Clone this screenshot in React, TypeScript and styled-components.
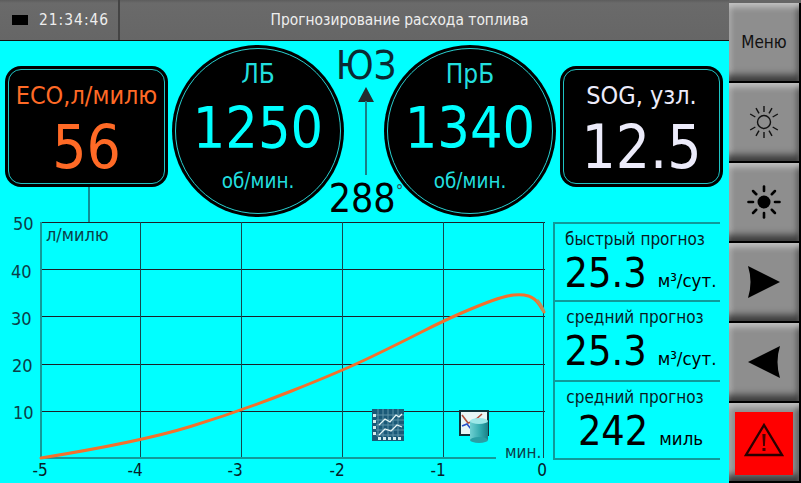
import styled, { createGlobalStyle } from 'styled-components';

const GlobalStyle = createGlobalStyle`
	html, body {
		margin: 0;
		padding: 0;
		background: #000;
	}
	body {
		font-family: "DejaVu Sans Condensed", "DejaVu Sans", sans-serif;
		font-stretch: condensed;
	}
`;

const Screen = styled.div`
	width: 801px;
	height: 483px;
	display: flex;
	overflow: hidden;
	background: #00ffff;
`;
const Main = styled.div`
	width: 729px;
	display: flex;
	flex-direction: column;
`;
const TitleBar = styled.header`
	height: 40px;
	flex: none;
	display: flex;
	align-items: center;
	background: linear-gradient(#5c5c5c 0, #6a6a6a 3px, #666 100%);
	border-bottom: 1px solid #111;
	color: #eee;
	font-size: 15.4px;
`;
const Clock = styled.div`
	width: 120px;
	height: 100%;
	box-sizing: border-box;
	display: flex;
	align-items: center;
	padding-left: 12px;
	gap: 11px;
	border-right: 2px solid #444;
	letter-spacing: 1px;
`;
const Indicator = styled.span`
	width: 16px;
	height: 10px;
	background: #000;
`;
const Title = styled.div`
	flex: 1;
	text-align: center;
	padding-right: 50px;
`;
const Gauges = styled.section`
	height: 174px;
	flex: none;
	display: flex;
	align-items: flex-start;
	padding: 4px 6px 0 5px;
	box-sizing: border-box;
`;
const SideColumn = styled.div<{ $left?: boolean }>`
	width: 163px;
	flex: none;
	margin: 21px ${p => (p.$left ? '4px' : '0')} 0 ${p => (p.$left ? '0' : '4px')};
`;
const ReadoutBox = styled.div`
	height: 121px;
	box-sizing: border-box;
	background: #000;
	border-radius: 16px;
	padding: 3px;
	display: flex;
`;
const ReadoutInner = styled.div<{ $color: string }>`
	flex: 1;
	border: 1.5px solid #1fc4c4;
	border-radius: 13px;
	color: ${p => p.$color};
	display: flex;
	flex-direction: column;
	align-items: center;
`;
const ReadoutLabel = styled.div`
	font-size: 25px;
	line-height: 30px;
	margin-top: 11px;
	white-space: nowrap;
`;
const ReadoutValue = styled.div`
	font-size: 60px;
	line-height: 64px;
	margin-top: 4px;
`;
const Stem = styled.div`
	width: 2px;
	height: 35px;
	margin-left: 83px;
	background: #0f8f96;
`;
const Dial = styled.div`
	width: 172px;
	height: 172px;
	flex: none;
	box-sizing: border-box;
	background: #000;
	border-radius: 50%;
	padding: 3px;
	display: flex;
`;
const DialInner = styled.div`
	flex: 1;
	border: 1.5px solid #28d0d0;
	border-radius: 50%;
	color: #00ffff;
	display: flex;
	flex-direction: column;
	align-items: center;
`;
const DialName = styled.div`
	font-size: 26px;
	line-height: 28px;
	margin-top: 11px;
	color: #22dede;
`;
const DialValue = styled.div`
	font-size: 57px;
	line-height: 70px;
	margin-top: 5px;
`;
const DialUnit = styled.div`
	font-size: 20.5px;
	line-height: 26px;
	margin-top: 5px;
	color: #22dede;
`;
const Compass = styled.div`
	width: 44px;
	margin-right: -4px;
	flex: none;
	display: flex;
	flex-direction: column;
	align-items: center;
	color: #0a2a33;
	position: relative;
	z-index: 1;
`;
const Bearing = styled.div`
	font-size: 39px;
	line-height: 42px;
	white-space: nowrap;
`;
const Heading = styled.div`
	font-size: 39px;
	line-height: 40px;
	white-space: nowrap;
	color: #000;
	margin-top: 4px;
	sup {
		font-size: 17px;
		line-height: 0;
		vertical-align: 15px;
		color: #35505a;
	}
`;
const Lower = styled.section`
	flex: 1;
	display: flex;
	min-height: 0;
`;
const Chart = styled.svg`
	width: 553px;
	height: 268px;
	flex: none;
	display: block;
	overflow: visible;
	font-family: "DejaVu Sans Condensed", "DejaVu Sans", sans-serif;
`;
const Stats = styled.div`
	width: 167px;
	height: 238px;
	margin-top: 7px;
	box-sizing: border-box;
	border-left: 2px solid #0f9a9a;
	border-bottom: 2px solid #0f9a9a;
	display: flex;
	flex-direction: column;
`;
const StatRow = styled.div<{ $h: number }>`
	height: ${p => p.$h}px;
	box-sizing: border-box;
	border-top: 2px solid #0f9a9a;
	color: #000;
	display: flex;
	flex-direction: column;
	align-items: center;
`;
const StatLabel = styled.div`
	font-size: 17px;
	line-height: 20px;
	margin-top: 5px;
	margin-right: 5px;
	color: #0a1a1f;
`;
const StatLine = styled.div`
	display: flex;
	align-items: baseline;
	gap: 11px;
	line-height: 40px;
	margin: 4px 0 0 6px;
`;
const StatValue = styled.span`
	font-size: 41px;
`;
const StatUnit = styled.span`
	font-size: 18.5px;
	white-space: nowrap;
`;
const Sidebar = styled.nav`
	width: 72px;
	flex: none;
	display: flex;
	flex-direction: column;
	padding: 3px 2px 0 0;
	box-sizing: border-box;
	gap: 2px;
	background: linear-gradient(#666 0, #666 3px, #000 3px);
`;
const SideButton = styled.button`
	height: 78px;
	flex: none;
	border: 0;
	padding: 0;
	font: inherit;
	font-size: 17px;
	color: #111;
	background: #8e8e8e;
	display: flex;
	align-items: center;
	justify-content: center;
	box-shadow:
		inset 0 7px 6px -3px #c4c4c4,
		inset 0 -9px 7px -3px #3c3c3c,
		inset 5px 0 5px -3px #bdbdbd,
		inset -5px 0 5px -3px #555;
`;
const AlarmFace = styled.div`
	width: 58px;
	height: 63px;
	margin-top: 2px;
	background: #ff0000;
	display: flex;
	align-items: center;
	justify-content: center;
	svg {
		margin-bottom: 6px;
	}
`;

const plot = { left: 41, right: 543, top: 7, bottom: 243 };
const xGrid = [140.5, 241.5, 342.5, 443.5, 543.5];
const yGrid = [7.5, 54.5, 101.5, 149.5, 196.5];
const xLabels: [string, number][] = [['-5', 40], ['-4', 135], ['-3', 235], ['-2', 337], ['-1', 438], ['0', 542]];
const yLabels: [string, number, number][] = [['50', 13, 15], ['40', 11, 63], ['30', 11, 110], ['20', 12, 157], ['10', 13, 204]];
const curve: [number, number][] = [
	[41, 243], [140, 227], [241, 196], [342, 156], [400, 128], [443, 106], [480, 90], [505, 81], [522, 79], [535, 83], [544, 97],
];

function smoothPath(points: [number, number][]) {
	let d = `M${points[0][0]} ${points[0][1]}`;
	for (let i = 1; i < points.length - 1; i++) {
		const mx = (points[i][0] + points[i + 1][0]) / 2;
		const my = (points[i][1] + points[i + 1][1]) / 2;
		d += ` Q${points[i][0]} ${points[i][1]} ${mx} ${my}`;
	}
	const last = points[points.length - 1];
	return `${d} L${last[0]} ${last[1]}`;
}

function TrendIcon() {
	return (
		<g transform="translate(372 194)">
			<rect width="32" height="32" fill="#1a5a78" />
			{[6, 11, 16, 21, 26].map(v => (
				<g key={v} stroke="#5d93a8" strokeWidth="1">
					<line x1={v} y1="0" x2={v} y2="28" />
					<line x1="4" y1={v} x2="32" y2={v} />
				</g>
			))}
			{[5, 11, 17, 23].map(v => (
				<rect key={v} x="1" y={v} width="3" height="3" fill="#d4ecec" />
			))}
			{[6, 11, 16, 21, 26].map(v => (
				<rect key={v} x={v} y="28" width="3" height="3" fill="#d4ecec" />
			))}
			<path d="M7 16 L13 10 L18 13 L24 6 L27 8 L30 5" fill="none" stroke="#e6f6f6" strokeWidth="1.3" />
			<path d="M7 26 L13 20 L19 22 L25 16 L30 18" fill="none" stroke="#e6f6f6" strokeWidth="1.3" />
		</g>
	);
}

function ArchiveIcon() {
	return (
		<g transform="translate(459 194)">
			<defs>
				<linearGradient id="drum" x1="0" x2="1" y1="0" y2="0">
					<stop offset="0" stopColor="#6fd0d2" />
					<stop offset="0.6" stopColor="#2fa8ac" />
					<stop offset="1" stopColor="#1b8086" />
				</linearGradient>
			</defs>
			<rect x="1" y="2" width="28" height="24" fill="#e8f6f6" stroke="#10323a" strokeWidth="2" />
			<path d="M3 6 L9 14 L15 12 L23 5" fill="none" stroke="#b0503c" strokeWidth="1.6" />
			<path d="M3 17 L8 15 L12 20" fill="none" stroke="#2850c8" strokeWidth="1.6" />
			<rect x="11" y="12" width="18" height="19" fill="url(#drum)" />
			<ellipse cx="20" cy="31" rx="9" ry="3" fill="#2a9ea4" />
			<ellipse cx="20" cy="12" rx="9" ry="3" fill="#9ce8e8" />
		</g>
	);
}

function SunOutline() {
	const rays = [0, 30, 60, 120, 150, 180, 210, 240, 300, 330];
	return (
		<svg width="34" height="34" viewBox="-17 -17 34 34">
			<circle r="6.5" fill="none" stroke="#111" strokeWidth="1.4" />
			{rays.map(a => (
				<line key={a} x1="0" y1="-10" x2="0" y2="-16" stroke="#111" strokeWidth="1.4" transform={`rotate(${a})`} />
			))}
		</svg>
	);
}

function SunFilled() {
	const rays = [0, 45, 90, 135, 180, 225, 270, 315];
	return (
		<svg width="34" height="34" viewBox="-17 -17 34 34">
			<circle r="6.5" fill="#000" />
			{rays.map(a => (
				<line key={a} x1="0" y1="-11" x2="0" y2="-15.5" stroke="#000" strokeWidth="2.6" strokeLinecap="round" transform={`rotate(${a})`} />
			))}
		</svg>
	);
}

function Pointer({ flip }: { flip?: boolean }) {
	return (
		<svg width="34" height="34" viewBox="0 0 34 34">
			<path d={flip ? 'M1 17 L33 1 Q28 17 33 33 Z' : 'M33 17 L1 1 Q6 17 1 33 Z'} fill="#000" />
		</svg>
	);
}

function App() {
	return (
		<Screen>
			<GlobalStyle />
			<Main>
				<TitleBar>
					<Clock>
						<Indicator />
						21:34:46
					</Clock>
					<Title>Прогнозирование расхода топлива</Title>
				</TitleBar>
				<Gauges>
					<SideColumn $left>
						<ReadoutBox>
							<ReadoutInner $color="#ff6a26">
								<ReadoutLabel>ECO,л/милю</ReadoutLabel>
								<ReadoutValue>56</ReadoutValue>
							</ReadoutInner>
						</ReadoutBox>
						<Stem />
					</SideColumn>
					<Dial>
						<DialInner>
							<DialName>ЛБ</DialName>
							<DialValue>1250</DialValue>
							<DialUnit>об/мин.</DialUnit>
						</DialInner>
					</Dial>
					<Compass>
						<Bearing>ЮЗ</Bearing>
						<svg width="16" height="88" viewBox="0 0 16 88">
							<path d="M8 0 L16 15 L0 15 Z" fill="#222c30" />
							<rect x="7" y="14" width="2" height="74" fill="#1a7f86" />
						</svg>
						<Heading>
							288<sup>°</sup>
						</Heading>
					</Compass>
					<Dial>
						<DialInner>
							<DialName>ПрБ</DialName>
							<DialValue>1340</DialValue>
							<DialUnit>об/мин.</DialUnit>
						</DialInner>
					</Dial>
					<SideColumn>
						<ReadoutBox>
							<ReadoutInner $color="#ecebfa">
								<ReadoutLabel>SOG, узл.</ReadoutLabel>
								<ReadoutValue>12.5</ReadoutValue>
							</ReadoutInner>
						</ReadoutBox>
					</SideColumn>
				</Gauges>
				<Lower>
					<Chart viewBox="0 0 553 268">
						{yGrid.map(y => (
							<line key={y} x1={plot.left} y1={y} x2={545} y2={y} stroke="#1c2028" strokeWidth="1" />
						))}
						{xGrid.map(x => (
							<line key={x} x1={x} y1={plot.top} x2={x} y2={plot.bottom} stroke="#15484e" strokeWidth="1" />
						))}
						<line x1={plot.left} y1={plot.top} x2={plot.left} y2={plot.bottom} stroke="#129a9a" strokeWidth="2" />
						<line x1={plot.left} y1={plot.bottom} x2={496} y2={plot.bottom} stroke="#129a9a" strokeWidth="2" />
						<path d={smoothPath(curve)} fill="none" stroke="#f4702c" strokeWidth="3" strokeLinecap="round" />
						<path d="M537 85 Q541 89 544 97" fill="none" stroke="#c0905a" strokeWidth="3" />
						<g fill="#0c3e48" fontSize="18">
							{yLabels.map(([t, x, y]) => (
								<text key={t} x={x} y={y}>
									{t}
								</text>
							))}
							<text x="46" y="26" fontSize="18">
								л/милю
							</text>
						</g>
						<g fill="#062028" fontSize="17">
							{xLabels.map(([t, x]) => (
								<text key={t} x={x} y="261" textAnchor="middle">
									{t}
								</text>
							))}
						</g>
						<text x="505" y="243" fill="#0c3e48" fontSize="17">
							мин.
						</text>
						<TrendIcon />
						<ArchiveIcon />
					</Chart>
					<Stats>
						<StatRow $h={78}>
							<StatLabel>быстрый прогноз</StatLabel>
							<StatLine>
								<StatValue>25.3</StatValue>
								<StatUnit>м³/сут.</StatUnit>
							</StatLine>
						</StatRow>
						<StatRow $h={80}>
							<StatLabel>средний прогноз</StatLabel>
							<StatLine>
								<StatValue>25.3</StatValue>
								<StatUnit>м³/сут.</StatUnit>
							</StatLine>
						</StatRow>
						<StatRow $h={78}>
							<StatLabel>средний прогноз</StatLabel>
							<StatLine>
								<StatValue>242</StatValue>
								<StatUnit>миль</StatUnit>
							</StatLine>
						</StatRow>
					</Stats>
				</Lower>
			</Main>
			<Sidebar>
				<SideButton>Меню</SideButton>
				<SideButton>
					<SunOutline />
				</SideButton>
				<SideButton>
					<SunFilled />
				</SideButton>
				<SideButton>
					<Pointer />
				</SideButton>
				<SideButton>
					<Pointer flip />
				</SideButton>
				<SideButton>
					<AlarmFace>
						<svg width="40" height="36" viewBox="0 0 40 36">
							<path d="M20 3 L38 33 L2 33 Z" fill="none" stroke="#2a0000" strokeWidth="2.4" />
							<path d="M18.4 12 H21.6 L20.9 24 H19.1 Z" fill="#4a0000" />
							<rect x="18.5" y="26" width="3" height="3" fill="#4a0000" />
						</svg>
					</AlarmFace>
				</SideButton>
			</Sidebar>
		</Screen>
	);
}

export default App;
